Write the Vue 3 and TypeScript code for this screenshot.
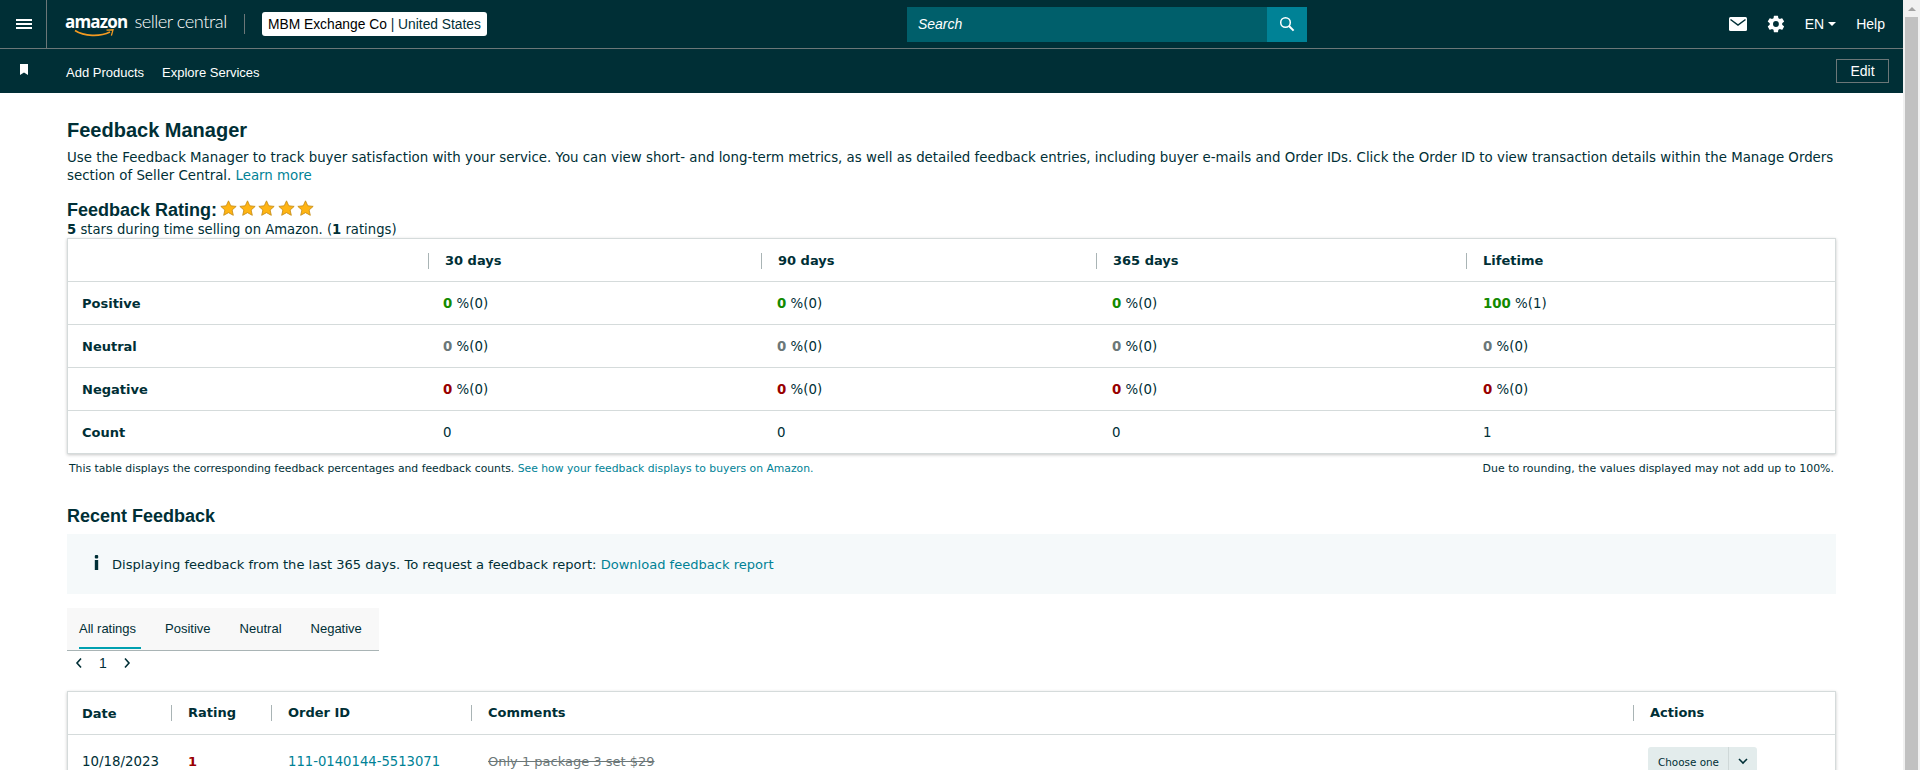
<template>
  <div class="page">
    <div class="main">
      <header class="topbar">
        <div class="menu-btn">
          <span></span><span></span><span></span>
        </div>
        <div class="logo">
          <span class="logo-amazon">amazon<svg class="smile" viewBox="0 0 42 10" width="42" height="10"><path d="M1 2.5C10 8.5 26 9 36 4" fill="none" stroke="#f39a21" stroke-width="1.6" /><path d="M32.5 2.2 39 1.8 37.4 7.6" fill="none" stroke="#f39a21" stroke-width="1.3" /></svg></span>
          <span class="logo-sub">seller central</span>
        </div>
        <div class="logo-sep"></div>
        <div class="account"><span class="account-name">MBM Exchange Co</span>&nbsp;| United States</div>
        <div class="search">
          <input class="search-input" type="text" placeholder="Search" />
          <div class="search-btn">
            <svg viewBox="0 0 16 16" width="16" height="16">
              <circle cx="6.5" cy="6.5" r="4.8" fill="none" stroke="#fff" stroke-width="1.5" />
              <path d="M10 10l4.6 4.6" stroke="#fff" stroke-width="2" />
            </svg>
          </div>
        </div>
        <div class="top-right">
          <svg class="mail" viewBox="0 0 18 14" width="18" height="14">
            <rect width="18" height="14" rx="1.5" fill="#fff" />
            <path d="M1.5 2.5 9 8l7.5-5.5" fill="none" stroke="#002f36" stroke-width="1.5" />
          </svg>
          <svg class="gear" viewBox="0 0 24 24" width="20" height="20">
            <path fill="#fff" d="M19.4 13c.04-.33.06-.66.06-1s-.02-.67-.06-1l2.1-1.65a.5.5 0 0 0 .12-.64l-2-3.46a.5.5 0 0 0-.6-.22l-2.49 1a7.3 7.3 0 0 0-1.73-1l-.38-2.65A.5.5 0 0 0 13.93 2h-4a.5.5 0 0 0-.49.42l-.38 2.65c-.62.25-1.2.59-1.73 1l-2.49-1a.5.5 0 0 0-.6.22l-2 3.46a.5.5 0 0 0 .12.64L4.47 11c-.04.33-.07.66-.07 1s.03.67.07 1l-2.11 1.65a.5.5 0 0 0-.12.64l2 3.46c.12.22.38.3.6.22l2.49-1c.53.41 1.11.75 1.73 1l.38 2.65c.04.24.25.42.49.42h4c.25 0 .46-.18.49-.42l.38-2.65c.62-.25 1.2-.59 1.73-1l2.49 1c.22.08.48 0 .6-.22l2-3.46a.5.5 0 0 0-.12-.64L19.4 13zM11.93 15.5a3.5 3.5 0 1 1 0-7 3.5 3.5 0 0 1 0 7z" />
          </svg>
          <span class="lang">EN<i class="caret"></i></span>
          <span class="help">Help</span>
        </div>
      </header>

      <nav class="subbar">
        <svg class="bookmark" viewBox="0 0 8 11" width="8" height="11">
          <path d="M0 0h8v11L4 8.6 0 11z" fill="#fff" />
        </svg>
        <a class="nav-link">Add Products</a>
        <a class="nav-link">Explore Services</a>
        <button class="edit-btn">Edit</button>
      </nav>

      <main class="content">
        <h1 class="title">Feedback Manager</h1>
        <p class="intro">
          Use the Feedback Manager to track buyer satisfaction with your service. You can view short- and long-term metrics, as well as detailed feedback entries, including buyer e-mails and Order IDs. Click the Order ID to view transaction details within the Manage Orders section of Seller Central.
          <a class="link">Learn more</a>
        </p>

        <div class="rating-head">
          <h2 class="rating-title">Feedback Rating:</h2>
          <div class="stars">
            <svg v-for="n in 5" :key="n" viewBox="0 0 20 19" width="17" height="16">
              <path d="M10 1l2.7 5.9 6.4.7-4.8 4.3 1.4 6.3L10 15l-5.7 3.2 1.4-6.3L.9 7.6l6.4-.7z" fill="#ffb412" stroke="#c58c16" stroke-width="1" />
            </svg>
          </div>
        </div>
        <p class="rating-sub"><b>5</b> stars during time selling on Amazon. (<b>1</b> ratings)</p>

        <div class="card metrics">
          <div class="m-row m-head">
            <div class="cell"></div>
            <div v-for="p in periods" :key="p" class="cell th"><span class="th-inner">{{ p }}</span></div>
          </div>
          <div v-for="row in metricRows" :key="row.label" class="m-row">
            <div class="cell label">{{ row.label }}</div>
            <div v-for="(v, i) in row.values" :key="i" class="cell val">
              <template v-if="row.tone">
                <b :class="row.tone">{{ v[0] }}</b> %({{ v[1] }})
              </template>
              <template v-else>{{ v[0] }}</template>
            </div>
          </div>
        </div>

        <div class="notes">
          <span>This table displays the corresponding feedback percentages and feedback counts. <a class="link">See how your feedback displays to buyers on Amazon.</a></span>
          <span class="note-right">Due to rounding, the values displayed may not add up to 100%.</span>
        </div>

        <h2 class="section-title">Recent Feedback</h2>
        <div class="info-box">
          <svg class="info-icon" viewBox="0 0 5 15" width="5" height="15">
            <rect x="0.8" y="0" width="3.4" height="3.4" rx="1" fill="#002f36" />
            <rect x="0.8" y="5" width="3.4" height="10" fill="#002f36" />
          </svg>
          <span>Displaying feedback from the last 365 days. To request a feedback report: <a class="link">Download feedback report</a></span>
        </div>

        <div class="tabs">
          <div v-for="(t, i) in tabs" :key="t" class="tab" :class="{ active: i === 0 }">{{ t }}</div>
        </div>
        <div class="pager">
          <svg viewBox="0 0 8 12" width="8" height="12"><path d="M6 1.5 2 6l4 4.5" fill="none" stroke="#002f36" stroke-width="1.6" /></svg>
          <span>1</span>
          <svg viewBox="0 0 8 12" width="8" height="12"><path d="M2 1.5 6 6l-4 4.5" fill="none" stroke="#002f36" stroke-width="1.6" /></svg>
        </div>

        <div class="card feedback">
          <div class="f-row f-head">
            <div class="cell th first">Date</div>
            <div v-for="h in feedbackHeads" :key="h" class="cell th"><span class="th-inner">{{ h }}</span></div>
          </div>
          <div class="f-row f-body">
            <div class="cell first date">10/18/2023</div>
            <div class="cell"><b class="neg">1</b></div>
            <div class="cell order"><a class="link">111-0140144-5513071</a></div>
            <div class="cell"><s class="struck">Only 1 package 3 set $29</s></div>
            <div class="cell">
              <div class="action-btn">
                <span class="action-text">Choose one</span>
                <span class="action-arrow">
                  <svg viewBox="0 0 10 7" width="10" height="7"><path d="M1 1l4 4 4-4" fill="none" stroke="#002f36" stroke-width="1.6" /></svg>
                </span>
              </div>
            </div>
          </div>
        </div>
      </main>
    </div>

    <div class="scrollbar">
      <div class="scroll-up"><i></i></div>
      <div class="scroll-thumb"></div>
    </div>
  </div>
</template>

<script setup lang="ts">
type Metric = { label: string; tone: string; values: [string, string?][] }

const periods = ['30 days', '90 days', '365 days', 'Lifetime']
const tabs = ['All ratings', 'Positive', 'Neutral', 'Negative']
const feedbackHeads = ['Rating', 'Order ID', 'Comments', 'Actions']

const metricRows: Metric[] = [
  { label: 'Positive', tone: 'pos', values: [['0', '0'], ['0', '0'], ['0', '0'], ['100', '1']] },
  { label: 'Neutral', tone: 'neu', values: [['0', '0'], ['0', '0'], ['0', '0'], ['0', '0']] },
  { label: 'Negative', tone: 'neg', values: [['0', '0'], ['0', '0'], ['0', '0'], ['0', '0']] },
  { label: 'Count', tone: '', values: [['0'], ['0'], ['0'], ['1']] }
]
</script>

<style>
html, body {
  margin: 0;
  height: 100%;
  overflow: hidden;
}
</style>

<style scoped>
.page {
  display: flex;
  height: 770px;
  overflow: hidden;
  background: #fff;
  color: #002f36;
  font-family: "DejaVu Sans", Verdana, sans-serif;
  font-size: 13px;
}

.main {
  flex: 1;
  min-width: 0;
}

/* top header */
.topbar {
  display: flex;
  align-items: center;
  height: 48px;
  background: #002f36;
  border-bottom: 1px solid #6c7778;
  font-family: "Liberation Sans", Arial, sans-serif;
  color: #fff;
}

.menu-btn {
  display: flex;
  flex-direction: column;
  justify-content: center;
  gap: 2px;
  width: 47px;
  height: 48px;
  padding-left: 16px;
  box-sizing: border-box;
  border-right: 1px solid #6c7778;
}

.menu-btn span {
  display: block;
  width: 16px;
  height: 2px;
  background: #fff;
}

.logo {
  display: flex;
  align-items: baseline;
  flex: none;
  width: 160px;
  margin-left: 18px;
  margin-top: -5px;
  white-space: nowrap;
}

.logo-amazon {
  position: relative;
  margin-right: 7px;
  font-family: "Open Sans", sans-serif;
  font-size: 17px;
  font-weight: 700;
  letter-spacing: -0.8px;
}

.smile {
  position: absolute;
  left: 9px;
  top: 18px;
}

.logo-sub {
  font-family: Lato, sans-serif;
  font-size: 18.3px;
  font-weight: 300;
  letter-spacing: -0.5px;
}

.logo-sep {
  width: 1px;
  height: 20px;
  margin-left: 19px;
  background: #6c7778;
}

.account {
  display: flex;
  align-items: center;
  height: 24px;
  margin-left: 17px;
  padding: 0 6px;
  background: #fff;
  border-radius: 3px;
  color: #002f36;
  font-size: 13.8px;
  white-space: nowrap;
}

.account-name {
  color: #000;
}

.search {
  display: flex;
  width: 400px;
  height: 35px;
  margin-left: 420px;
}

.search-input {
  flex: 1;
  min-width: 0;
  border: 0;
  outline: 0;
  padding: 0 11px;
  background: #005f6b;
  color: #fff;
  font-family: "Liberation Sans", Arial, sans-serif;
  font-size: 14px;
  font-style: italic;
}

.search-input::placeholder {
  color: #fff;
  opacity: 1;
}

.search-btn {
  display: flex;
  align-items: center;
  justify-content: center;
  width: 40px;
  background: #008296;
}

.top-right {
  display: flex;
  align-items: center;
  margin-left: auto;
  padding-right: 18px;
  font-size: 14px;
}

.gear {
  margin-left: 19px;
}

.lang {
  display: flex;
  align-items: center;
  margin-left: 19px;
}

.caret {
  width: 0;
  height: 0;
  margin-left: 4px;
  border-left: 4.5px solid transparent;
  border-right: 4.5px solid transparent;
  border-top: 4.5px solid #fff;
}

.help {
  margin-left: 20px;
}

/* second row */
.subbar {
  display: flex;
  align-items: center;
  height: 44px;
  padding-left: 20px;
  padding-right: 14px;
  background: #002f36;
  font-family: "Liberation Sans", Arial, sans-serif;
  font-size: 13px;
  color: #fff;
}

.bookmark {
  margin-right: 38px;
  margin-top: -3px;
}

.nav-link {
  margin-right: 18px;
  margin-top: 2px;
}

.edit-btn {
  height: 24px;
  width: 53px;
  margin-left: auto;
  padding: 0;
  background: transparent;
  border: 1px solid #6c7778;
  color: #fff;
  font-family: inherit;
  font-size: 14px;
}

/* page content */
.content {
  padding: 26px 67px 0;
}

.title {
  margin: 0 0 8px;
  font-family: "Liberation Sans", Arial, sans-serif;
  font-size: 20px;
  line-height: 22px;
  font-weight: 700;
}

.intro {
  margin: 0;
  font-size: 13.35px;
  line-height: 18px;
}

.link {
  color: #008296;
}

.rating-head {
  display: flex;
  align-items: center;
  margin-top: 13px;
  height: 24px;
}

.rating-title {
  margin: 0;
  font-family: "Liberation Sans", Arial, sans-serif;
  font-size: 18px;
  font-weight: 700;
}

.stars {
  display: flex;
  gap: 2.2px;
  margin-left: 3px;
  margin-top: -4px;
}

.rating-sub {
  margin: 0;
  font-size: 13.2px;
  line-height: 16px;
}

.card {
  border: 1px solid #d5dbdb;
  box-shadow: 0 1px 3px rgba(0, 0, 0, 0.22);
  background: #fff;
}

.m-row {
  display: grid;
  grid-template-columns: 360px 333px 335px 370px 1fr;
  height: 42px;
  border-top: 1px solid #d5dbdb;
  align-items: center;
}

.m-row.m-head {
  box-sizing: border-box;
  height: 42px;
  padding-top: 2px;
  border-top: 0;
}

.cell {
  padding-left: 15px;
}

.val {
  font-size: 13.35px;
}

.val + .val {
  padding-left: 16px;
}

.val:last-child {
  padding-left: 17px;
}

.th {
  font-weight: 700;
}

.m-head .th,
.f-head .th {
  padding-left: 0;
}

.th-inner {
  display: block;
  padding-left: 16px;
  line-height: 16px;
  border-left: 1px solid #a9b4b5;
}

.label {
  padding-left: 14px;
  font-weight: 700;
}

.pos { color: #148a00; }
.neu { color: #6c7778; }
.neg { color: #990000; }

.notes {
  display: flex;
  justify-content: space-between;
  margin-top: 7px;
  padding: 0 2px;
  font-size: 10.8px;
  line-height: 15px;
}

.note-right {
  font-size: 10.95px;
}

.section-title {
  margin: 29px 0 0;
  font-family: "Liberation Sans", Arial, sans-serif;
  font-size: 18px;
  line-height: 22px;
  font-weight: 700;
}

.info-box {
  display: flex;
  align-items: center;
  gap: 13px;
  height: 60px;
  margin-top: 7px;
  padding-left: 27px;
  background: #f5f9fa;
  font-size: 13.05px;
}

.info-icon {
  margin-top: -3px;
}

.tabs {
  display: flex;
  width: 312px;
  height: 43px;
  margin-top: 14px;
  padding-left: 12px;
  box-sizing: border-box;
  background: #f8f8f8;
  border-bottom: 1px solid #a9b4b5;
  font-family: "Liberation Sans", Arial, sans-serif;
  font-size: 13px;
}

.tab {
  height: 29px;
  padding-top: 9px;
  padding-right: 5px;
  margin-right: 24px;
  line-height: 24px;
  white-space: nowrap;
}

.tab.active {
  height: 30px;
  border-bottom: 2px solid #00a0b0;
}

.pager {
  display: flex;
  align-items: center;
  gap: 16px;
  height: 24px;
  padding-left: 8px;
  font-family: "Liberation Sans", Arial, sans-serif;
  font-size: 14px;
}

.feedback {
  margin-top: 16px;
}

.f-row {
  display: grid;
  grid-template-columns: 103px 100px 200px 1162px 1fr;
}

.f-head {
  height: 42px;
  align-items: center;
}

.f-body {
  border-top: 1px solid #d5dbdb;
  padding-top: 12px;
  padding-bottom: 12px;
  align-items: center;
}

.first,
.f-head .th.first {
  padding-left: 14px;
}

.f-body .cell:not(.first) {
  padding-left: 17px;
}

.date {
  font-size: 13.35px;
}

.order {
  font-size: 13.2px;
}

.struck {
  color: #6c7778;
}

.action-btn {
  display: inline-flex;
  align-items: center;
  height: 29px;
  margin-left: -2px;
  background: #e3ecec;
  border-radius: 3px;
  font-size: 10.4px;
}

.action-text {
  padding: 0 9px 0 10px;
}

.action-arrow {
  display: flex;
  align-items: center;
  justify-content: center;
  width: 28px;
  height: 100%;
  border-left: 1px solid #cfd8d8;
}

/* page scrollbar */
.scrollbar {
  flex: none;
  width: 17px;
  background: #f1f1f1;
}

.scroll-up {
  display: flex;
  align-items: center;
  justify-content: center;
  height: 17px;
}

.scroll-up i {
  width: 0;
  height: 0;
  border-left: 4px solid transparent;
  border-right: 4px solid transparent;
  border-bottom: 4px solid #a3a3a3;
}

.scroll-thumb {
  height: 753px;
  margin: 0 2px;
  background: #c1c1c1;
}
</style>
